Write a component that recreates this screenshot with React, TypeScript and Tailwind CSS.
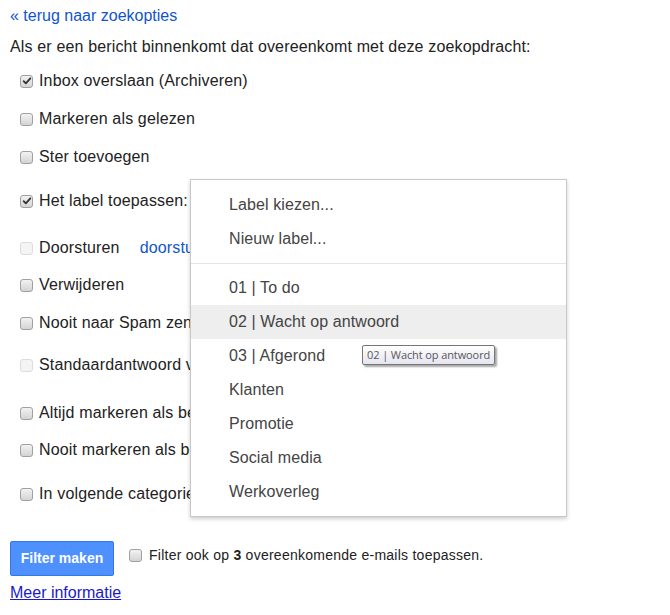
import React from "react";

type Row = {
  label: string;
  checked?: boolean;
  disabled?: boolean;
  mt: string;
  extra?: React.ReactNode;
  tall?: boolean;
};

function Box({ checked, disabled }: { checked?: boolean; disabled?: boolean }) {
  return (
    <span
      className={`relative inline-flex h-[13px] w-[13px] shrink-0 items-center justify-center rounded-[3px] border ${
        disabled
          ? "border-[#dcdcdc] bg-[#f4f4f4]"
          : "border-[#a0a0a0] bg-gradient-to-b from-[#f2f2f2] to-[#d4d4d4]"
      }`}
    >
      {checked && (
        <svg viewBox="0 0 12 12" className="h-[10px] w-[10px]">
          <path d="M2 6.2 L4.6 8.8 L10 2.8" fill="none" stroke="#333" strokeWidth="2.2" strokeLinecap="round" strokeLinejoin="round" />
        </svg>
      )}
    </span>
  );
}

const rows: Row[] = [
  { label: "Inbox overslaan (Archiveren)", checked: true, mt: "mt-[14px]" },
  { label: "Markeren als gelezen", mt: "mt-[18px]" },
  { label: "Ster toevoegen", mt: "mt-[18px]" },
  {
    label: "Het label toepassen:",
    checked: true,
    mt: "mt-[17px]",
    tall: true,
    extra: <span className="ml-[5px] inline-block h-[34px] w-[200px] shrink-0 rounded-[2px] border border-[#4d90fe]" />,
  },
  {
    label: "Doorsturen",
    disabled: true,
    mt: "mt-[20px]",
    extra: <a className="ml-[20px] text-[#1155cc]">doorsturen naar adres toevoegen</a>,
  },
  { label: "Verwijderen", mt: "mt-[17px]" },
  { label: "Nooit naar Spam zenden", mt: "mt-[18px]" },
  { label: "Standaardantwoord verzenden:", disabled: true, mt: "mt-[22px]" },
  { label: "Altijd markeren als belangrijk", mt: "mt-[28px]" },
  { label: "Nooit markeren als belangrijk", mt: "mt-[17px]" },
  { label: "In volgende categorie plaatsen:", mt: "mt-[24px]" },
];

const labels = ["01 | To do", "02 | Wacht op antwoord", "03 | Afgerond", "Klanten", "Promotie", "Social media", "Werkoverleg"];

export default function App() {
  return (
    <div className="relative h-[615px] w-[670px] overflow-hidden bg-white px-[10px] text-[16px] tracking-[0.15px] text-[#222] [font-family:'Liberation_Sans',Arial,sans-serif]">
      <a className="mt-[6px] block h-[20px] leading-[20px] tracking-normal text-[#1155cc]">« terug naar zoekopties</a>
      <p className="mt-[11px] h-[20px] leading-[20px]">Als er een bericht binnenkomt dat overeenkomt met deze zoekopdracht:</p>

      {rows.map((r) => (
        <div
          key={r.label}
          className={`flex items-center pl-[10px] ${r.mt} ${r.tall ? "h-[34px]" : "h-[20px]"} leading-[20px] whitespace-nowrap`}
        >
          <Box checked={r.checked} disabled={r.disabled} />
          <span className="ml-[6px]">{r.label}</span>
          {r.extra}
        </div>
      ))}

      <div className="mt-[37px] flex items-start">
        <button className="h-[35px] w-[104px] rounded-[2px] border border-[#3079ed] bg-[#4d90fe] text-[14px] font-bold tracking-normal text-white">
          Filter maken
        </button>
        <label className="ml-[15px] mt-[5px] flex items-center text-[14px] leading-[18px] tracking-[0.25px]">
          <Box />
          <span className="ml-[7px]">
            Filter ook op <b>3</b> overeenkomende e-mails toepassen.
          </span>
        </label>
      </div>
      <a className="mt-[7px] block w-fit leading-[20px] tracking-normal text-[#1a1ac8] underline">Meer informatie</a>

      {/* label dropdown */}
      <div className="absolute left-[190px] top-[179px] z-10 w-[377px] border border-[#c8c8c8] bg-white pb-[7px] pt-[8px] text-[16px] tracking-[0.1px] text-[#444] shadow-[0_2px_4px_rgba(0,0,0,0.2)]">
        <div className="flex h-[34px] items-center pl-[38px]">Label kiezen...</div>
        <div className="flex h-[34px] items-center pl-[38px]">Nieuw label...</div>
        <div className="my-[7px] h-px bg-[#e5e5e5]" />
        {labels.map((l, i) => (
          <div key={l} className={`flex h-[34px] items-center pl-[38px] ${i === 1 ? "bg-[#eeeeee]" : ""}`}>
            {l}
          </div>
        ))}
      </div>

      {/* tooltip */}
      <div className="absolute left-[362px] top-[345px] z-20 flex h-[20px] items-center whitespace-nowrap rounded-[2px] border border-[#767676] bg-gradient-to-b from-white to-[#e4e5f0] px-[4px] text-[11px] tracking-[-0.1px] text-[#575757] shadow-[2px_2px_2px_rgba(0,0,0,0.35)] [font-family:'Open_Sans',sans-serif]">
        02 | Wacht op antwoord
      </div>
    </div>
  );
}
